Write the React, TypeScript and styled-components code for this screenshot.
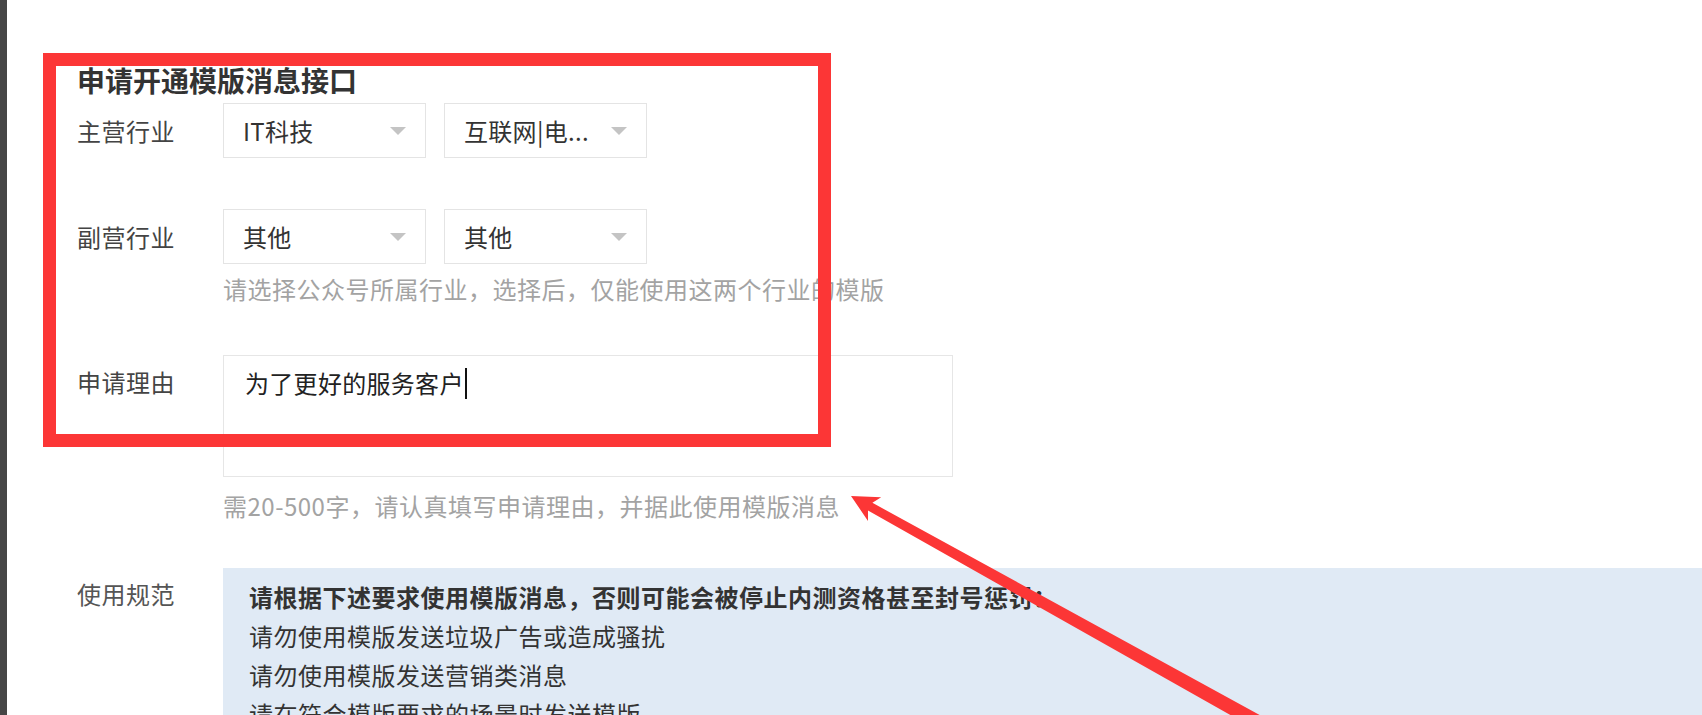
import React from "react";
import styled, { createGlobalStyle } from "styled-components";

const GlobalStyle = createGlobalStyle`
  html, body {
    margin: 0;
    padding: 0;
    overflow: hidden;
    background: #ffffff;
    font-family: "Noto Sans CJK SC", "Microsoft YaHei", "Liberation Sans", sans-serif;
  }
`;

const Page = styled.div`
  position: relative;
  display: flex;
  width: 100%;
  height: 100vh;
  overflow: hidden;
`;

const SideBar = styled.div`
  width: 7px;
  flex-shrink: 0;
  background: #464646;
`;

const Main = styled.div`
  flex: 1;
  padding: 63px 0 0 70px;
`;

const Title = styled.h2`
  margin: 0;
  font-size: 28px;
  line-height: 34px;
  font-weight: 700;
  color: #333;
`;

const Row = styled.div<{ $top: number }>`
  display: flex;
  align-items: flex-start;
  margin-top: ${(p) => p.$top}px;
`;

const Label = styled.div<{ $lh?: number; $top?: number; $muted?: boolean }>`
  width: 146px;
  flex-shrink: 0;
  font-size: 24px;
  letter-spacing: 0.5px;
  line-height: ${(p) => p.$lh ?? 24}px;
  margin-top: ${(p) => p.$top ?? 0}px;
  color: ${(p) => (p.$muted ? "#555" : "#444")};
`;

const Field = styled.div`
  display: flex;
  flex-direction: column;
  flex: 1;
`;

const SelectGroup = styled.div`
  display: flex;
  gap: 18px;
`;

const Select = styled.div`
  box-sizing: border-box;
  width: 203px;
  height: 55px;
  border: 1px solid #e4e4e4;
  padding: 0 19px 0 19px;
  display: flex;
  align-items: center;
  justify-content: space-between;
  font-size: 24px;
  letter-spacing: 0.3px;
  color: #333;
  background: #fff;
`;

const Caret = styled.span`
  width: 0;
  height: 0;
  border-left: 8px solid transparent;
  border-right: 8px solid transparent;
  border-top: 8px solid #c4c4c4;
`;

const Hint = styled.div<{ $top: number }>`
  margin-top: ${(p) => p.$top}px;
  font-size: 24px;
  letter-spacing: 0.5px;
  line-height: 24px;
  color: #a3a3a3;
  white-space: nowrap;
`;

const TextBox = styled.div`
  box-sizing: border-box;
  width: 730px;
  height: 122px;
  border: 1px solid #e6e6e6;
  padding: 12px 21px;
  font-size: 24px;
  letter-spacing: 0.3px;
  line-height: 28px;
  color: #222;
`;

const Cursor = styled.span`
  display: inline-block;
  width: 2px;
  height: 31px;
  margin-left: 1px;
  vertical-align: -6px;
  background: #111;
`;

const Notice = styled.div`
  flex: 1;
  min-height: 300px;
  background: #e0eaf5;
  padding: 9px 26px;
  font-size: 24px;
  letter-spacing: 0.5px;
  line-height: 39px;
  color: #333;
`;

const NoticeLine = styled.div<{ $strong?: boolean }>`
  font-weight: ${(p) => (p.$strong ? 700 : 400)};
  white-space: nowrap;
`;

const HighlightBox = styled.div`
  position: absolute;
  left: 43px;
  top: 53px;
  width: 788px;
  height: 394px;
  box-sizing: border-box;
  border: 13px solid #fc3636;
  pointer-events: none;
`;

const ArrowLayer = styled.svg`
  position: absolute;
  left: 0;
  top: 0;
  pointer-events: none;
`;

const rules = [
  "请勿使用模版发送垃圾广告或造成骚扰",
  "请勿使用模版发送营销类消息",
  "请在符合模版要求的场景时发送模版",
];

export default function App() {
  return (
    <>
      <GlobalStyle />
      <Page>
        <SideBar />
        <Main>
          <Title>申请开通模版消息接口</Title>

          <Row $top={6}>
            <Label $lh={55}>主营行业</Label>
            <Field>
              <SelectGroup>
                <Select>
                  IT科技
                  <Caret />
                </Select>
                <Select>
                  互联网|电...
                  <Caret />
                </Select>
              </SelectGroup>
            </Field>
          </Row>

          <Row $top={51}>
            <Label $lh={55}>副营行业</Label>
            <Field>
              <SelectGroup>
                <Select>
                  其他
                  <Caret />
                </Select>
                <Select>
                  其他
                  <Caret />
                </Select>
              </SelectGroup>
              <Hint $top={13}>
                请选择公众号所属行业，选择后，仅能使用这两个行业的模版
              </Hint>
            </Field>
          </Row>

          <Row $top={54}>
            <Label $top={15}>申请理由</Label>
            <Field>
              <TextBox>
                为了更好的服务客户
                <Cursor />
              </TextBox>
              <Hint $top={17}>需20-500字，请认真填写申请理由，并据此使用模版消息</Hint>
            </Field>
          </Row>

          <Row $top={50}>
            <Label $top={14} $muted>
              使用规范
            </Label>
            <Notice>
              <NoticeLine $strong>
                请根据下述要求使用模版消息，否则可能会被停止内测资格甚至封号惩罚：
              </NoticeLine>
              {rules.map((r) => (
                <NoticeLine key={r}>{r}</NoticeLine>
              ))}
            </Notice>
          </Row>
        </Main>

        <HighlightBox />
        <ArrowLayer width="1702" height="715" viewBox="0 0 1702 715">
          <polygon
            fill="#fc3636"
            points="851,496 881.2,497.3 872.4,502.8 1309.1,742.1 1301.8,755.3 868,510.6 868,520.9"
          />
        </ArrowLayer>
      </Page>
    </>
  );
}
